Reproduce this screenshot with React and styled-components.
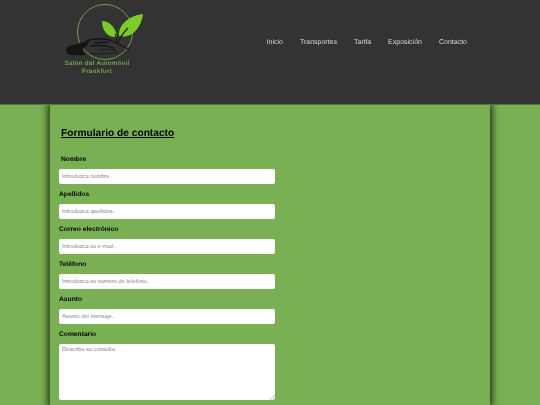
import styled, { createGlobalStyle } from 'styled-components';

const GlobalStyle = createGlobalStyle`
  html, body {
    margin: 0;
    height: 405px;
    overflow: hidden;
    background: #78b053;
    font-family: "Liberation Sans", Arial, sans-serif;
    text-rendering: geometricPrecision;
  }
`;

const fields = [
  { label: 'Apellidos', placeholder: 'Introduzca apellidos..' },
  { label: 'Correo electrónico', placeholder: 'Introduzca su e-mail..' },
  { label: 'Teléfono', placeholder: 'Introduzca su numero de telefono..' },
  { label: 'Asunto', placeholder: 'Asunto del mensaje..' },
];

const links = ['Inicio', 'Transportes', 'Tarifa', 'Exposición', 'Contacto'];

function Logo() {
  return (
    <LogoBox>
      <svg width="96" height="62" viewBox="0 0 96 62">
        <circle cx="41" cy="28" r="27.5" fill="none" stroke="#6f9f50" strokeWidth="1" />
        {/* leaves */}
        <path d="M38 17 C46 17 52 24 53 33 C44 34 38 27 38 17 Z" fill="#7ccb26" />
        <path d="M79 10 C77 24 68 35 55 32 C54 21 64 12 79 10 Z" fill="#7ccb26" />
        <path d="M53 40 C53 36 53 33 51 30 M54 40 C55 35 58 30 64 24" fill="none" stroke="#1e1e1e" strokeWidth="1.2" />
        {/* car */}
        <path d="M2 46 C2 42 8 41 14 40 C20 38 22 37 25 37 L23 42 C16 44 20 49 22 51 C14 52 6 51 3 50 Z" fill="#141414" />
        <path d="M22 37 C30 34 42 34 48 37 C52 39 58 42 66 46 M30 39 L44 38 M26 42 C34 41 44 42 50 44" fill="none" stroke="#141414" strokeWidth="1.3" />
        <path d="M26 49 C34 51 44 50 54 48 M34 46 C40 45 46 45 52 46" fill="none" stroke="#1a1a1a" strokeWidth="1" />
      </svg>
      <LogoText>Salón del Automóvil<br />Frankfurt</LogoText>
    </LogoBox>
  );
}

export default function App() {
  return (
    <>
      <GlobalStyle />
      <Header>
        <Logo />
        <Nav>
          {links.map((link) => (
            <NavLink key={link}>{link}</NavLink>
          ))}
        </Nav>
      </Header>
      <Panel>
        <Title>Formulario de contacto</Title>
        <Form>
          <FirstLabel>Nombre</FirstLabel>
          <Input placeholder="Introduzca nombre.." />
          {fields.map((field) => (
            <div key={field.label}>
              <Label>{field.label}</Label>
              <Input placeholder={field.placeholder} />
            </div>
          ))}
          <Label>Comentario</Label>
          <TextArea placeholder="Describa su consulta" />
        </Form>
      </Panel>
    </>
  );
}

const Header = styled.header`
  position: relative;
  z-index: 1;
  height: 105px;
  background: #333333;
  border-bottom: 1px solid #55753f;
  box-sizing: border-box;
  display: flex;
  justify-content: space-between;
  padding: 0 73px 0 64px;
`;
const LogoBox = styled.div`
  width: 96px;
  padding-top: 4px;
  position: relative;
`;
const LogoText = styled.div`
  position: absolute;
  left: -3px;
  top: 60px;
  width: 72px;
  font-size: 6.3px;
  line-height: 8px;
  font-weight: 700;
  text-align: center;
  white-space: nowrap;
  color: #76a257;
  letter-spacing: 0.25px;
  will-change: opacity;
`;
const Nav = styled.nav`
  display: flex;
  gap: 17px;
  padding-top: 38px;
`;
const NavLink = styled.a`
  font-size: 7px;
  line-height: 10px;
  color: #d8d8d8;
  will-change: opacity;
`;
const Panel = styled.main`
  width: 440px;
  height: 300px;
  margin-left: 50px;
  box-sizing: border-box;
  padding: 22px 0 0 9px;
  background: #78b053;
  box-shadow: 0 0 7px 2px rgba(25, 35, 15, 0.95);
`;
const Title = styled.h2`
  margin: 0 0 0 2px;
  font-size: 10.2px;
  line-height: 14px;
  font-weight: 700;
  color: #000;
  text-decoration: underline;
  will-change: opacity;
`;
const Form = styled.form`
  margin-top: 14px;
  width: 216px;
`;
const Label = styled.label`
  display: block;
  height: 20px;
  padding-top: 6px;
  box-sizing: border-box;
  font-size: 6.7px;
  line-height: 10px;
  font-weight: 700;
  color: #000;
  will-change: opacity;
`;
const FirstLabel = styled(Label)`
  height: 14px;
  padding: 0 0 0 2px;
`;
const Input = styled.input`
  display: block;
  width: 100%;
  height: 15px;
  box-sizing: border-box;
  border: 0;
  border-radius: 2px;
  padding: 0 3px;
  background: #fff;
  font-family: inherit;
  font-size: 5.7px;
  text-rendering: geometricPrecision;
  &::placeholder {
    color: #858585;
    opacity: 1;
  }
`;
const TextArea = styled.textarea`
  display: block;
  width: 100%;
  height: 56px;
  box-sizing: border-box;
  border: 0;
  border-radius: 2px;
  padding: 3px;
  background: #fff;
  font-family: inherit;
  font-size: 5.7px;
  text-rendering: geometricPrecision;
  &::placeholder {
    color: #858585;
    opacity: 1;
  }
  &::-webkit-resizer {
    background: linear-gradient(135deg, transparent 45%, #bbb 45%, #bbb 58%, transparent 58%, transparent 72%, #bbb 72%, #bbb 85%, transparent 85%) no-repeat right bottom / 5px 5px;
  }
`;
